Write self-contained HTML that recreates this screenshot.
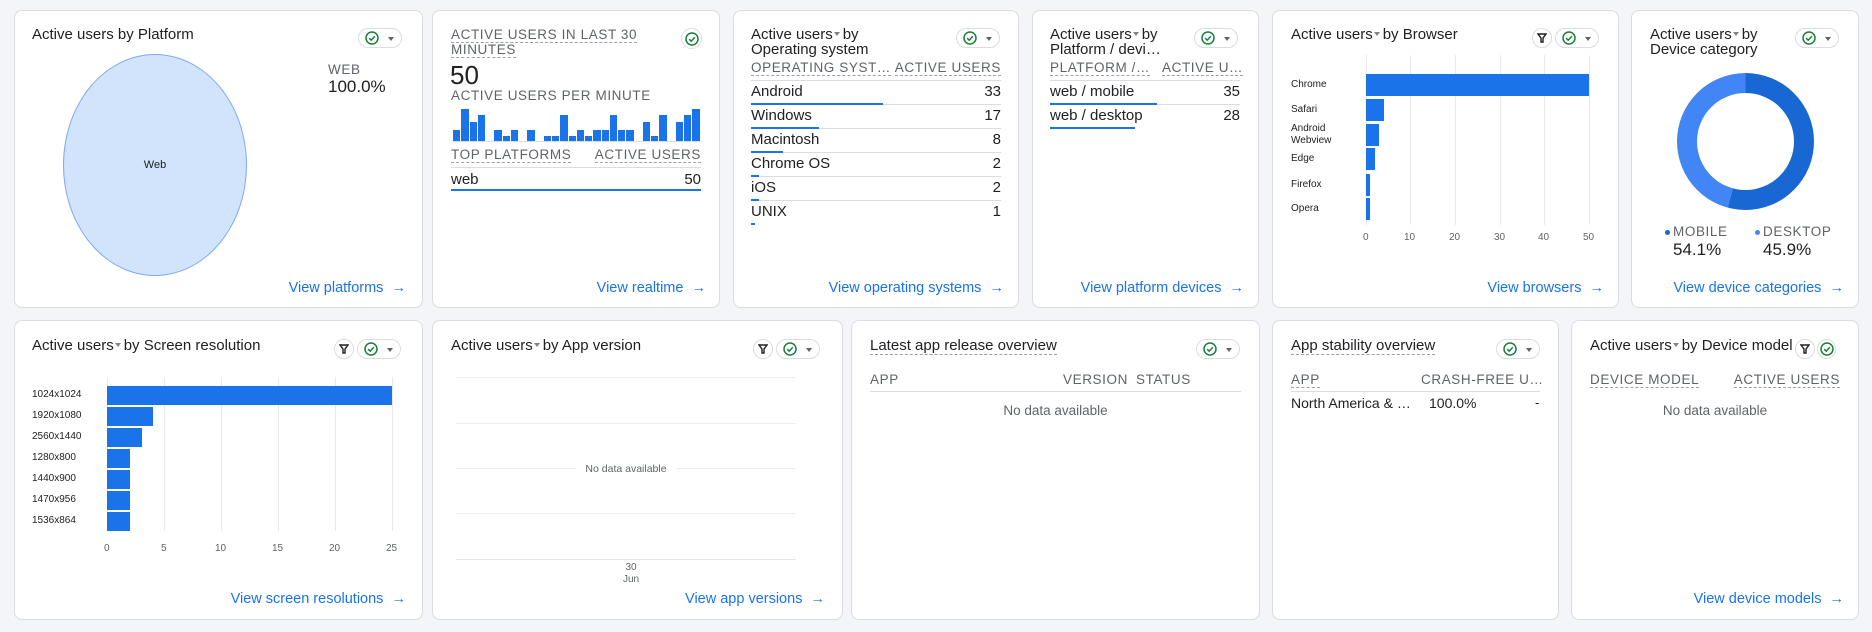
<!DOCTYPE html>
<html><head><meta charset="utf-8"><style>
*{margin:0;padding:0;box-sizing:border-box}
body{width:1872px;height:632px;background:#f3f5f8;font-family:"Liberation Sans",Arial,sans-serif;color:#202124;position:relative;overflow:hidden}
.card{position:absolute;background:#fff;border:1px solid #dadce0;border-radius:8px}
.t{position:absolute;white-space:nowrap;line-height:18px;font-size:15px}
.h{position:absolute;white-space:nowrap;line-height:18px;font-size:13.5px;color:#5f6368;letter-spacing:.6px;text-transform:uppercase}
.r{text-align:right}
.lnk{position:absolute;white-space:nowrap;line-height:18px;font-size:14.5px;color:#1a73e8}
.dot{border-bottom:1px dashed #9aa0a6}
.pill{position:absolute;width:44px;height:20px;border:1px solid #dadce0;border-radius:10px;background:#fff}
.pill .ck{position:absolute;left:6px;top:2px}
.pill .dd{position:absolute;left:29px;top:8px;width:0;height:0;border-left:3px solid transparent;border-right:3px solid transparent;border-top:4px solid #5f6368}
.flt{position:absolute;width:20px;height:20px;border:1px solid #dadce0;border-radius:10px;background:#fff}
.flt svg{position:absolute;left:4px;top:4px}
.tri{display:inline-block;width:0;height:0;border-left:3px solid transparent;border-right:3px solid transparent;border-top:4px solid #80868b;vertical-align:3px;margin:0 3px 0 1px}
.gl{position:absolute;height:1px;background:#dadce0}
.bl{position:absolute;height:2px;background:#1a73e8}
.vg{position:absolute;width:1px;background:#e8eaed}
.bar{position:absolute;background:#1a73e8}
.ax{position:absolute;font-size:10px;color:#5f6368;line-height:12px;white-space:nowrap}
.nd{position:absolute;font-size:13.5px;color:#5f6368;line-height:18px;white-space:nowrap}
</style></head><body>
<svg width="0" height="0" style="position:absolute"><defs>
<symbol id="ck" viewBox="0 0 14 14"><circle cx="7" cy="7" r="6" fill="none" stroke="#188038" stroke-width="1.5"/><path d="M4.2 7.2l2 2 3.6-4" fill="none" stroke="#188038" stroke-width="1.5"/></symbol>
<symbol id="fl" viewBox="0 0 10 10"><path d="M1 1h8L6 5v4H4V5z" fill="none" stroke="#202124" stroke-width="1.4"/></symbol>
</defs></svg>

<!-- Row 1 cards -->
<div class="card" style="left:14px;top:10px;width:409px;height:298px"></div>
<div class="card" style="left:432px;top:10px;width:288px;height:298px"></div>
<div class="card" style="left:733px;top:10px;width:286px;height:298px"></div>
<div class="card" style="left:1032px;top:10px;width:227px;height:298px"></div>
<div class="card" style="left:1272px;top:10px;width:347px;height:298px"></div>
<div class="card" style="left:1631px;top:10px;width:228px;height:298px"></div>
<!-- Row 2 cards -->
<div class="card" style="left:14px;top:320px;width:409px;height:300px"></div>
<div class="card" style="left:432px;top:320px;width:411px;height:300px"></div>
<div class="card" style="left:851px;top:320px;width:409px;height:300px"></div>
<div class="card" style="left:1272px;top:320px;width:287px;height:300px"></div>
<div class="card" style="left:1571px;top:320px;width:288px;height:300px"></div>

<!-- Card 1 -->
<div class="t" style="left:32px;top:26px">Active users by Platform</div>
<div class="pill" style="left:358px;top:28px"><svg class="ck" width="14" height="14"><use href="#ck"/></svg><i class="dd"></i></div>
<div style="position:absolute;left:63px;top:54px;width:184px;height:222px;border-radius:50%;background:#d2e3fc;border:1px solid #7baaf7"></div>
<div class="t" style="left:63px;top:156px;width:184px;text-align:center;font-size:11px">Web</div>
<div class="h" style="left:328px;top:61px">WEB</div>
<div class="t" style="left:328px;top:78px;font-size:17px">100.0%</div>
<div class="lnk" style="right:1466px;top:279px">View platforms&nbsp; →</div>

<!-- Card 2 -->
<div class="h" style="left:451px;top:26px"><span class="dot">ACTIVE USERS IN LAST 30</span></div>
<div class="h" style="left:451px;top:41px"><span class="dot">MINUTES</span></div>
<div style="position:absolute;left:681px;top:28px;width:21px;height:21px;border:1px solid #dadce0;border-radius:50%"><svg style="position:absolute;left:3px;top:3px" width="14" height="14"><use href="#ck"/></svg></div>
<div class="t" style="left:450px;top:61px;font-size:26px;line-height:28px">50</div>
<div class="h" style="left:451px;top:87px">ACTIVE USERS PER MINUTE</div>
<div id="bars" style="position:absolute;left:453px;top:110px;width:248px;height:32px;border-bottom:1px solid #dadce0"></div>
<div class="h" style="left:451px;top:146px"><span class="dot">TOP PLATFORMS</span></div>
<div class="h r" style="right:1171px;top:146px"><span class="dot">ACTIVE USERS</span></div>
<div class="gl" style="left:451px;top:167px;width:250px"></div>
<div class="t" style="left:451px;top:171px">web</div>
<div class="t r" style="right:1171px;top:171px">50</div>
<div class="bl" style="left:451px;top:189px;width:250px"></div>
<div class="lnk" style="right:1166px;top:279px">View realtime&nbsp; →</div>

<!-- Card 3 -->
<div class="t" style="left:751px;top:26px">Active users<i class="tri"></i>by</div>
<div class="t" style="left:751px;top:41px">Operating system</div>
<div class="pill" style="left:956px;top:28px"><svg class="ck" width="14" height="14"><use href="#ck"/></svg><i class="dd"></i></div>
<div class="h" style="left:751px;top:59px"><span class="dot">OPERATING SYST…</span></div>
<div class="h r" style="right:871px;top:59px"><span class="dot">ACTIVE USERS</span></div>
<div class="gl" style="left:751px;top:80px;width:250px"></div>
<div class="t" style="left:751px;top:83px">Android</div><div class="t r" style="right:871px;top:83px">33</div>
<div class="gl" style="left:751px;top:104px;width:250px"></div><div class="bl" style="left:751px;top:103px;width:132px"></div>
<div class="t" style="left:751px;top:107px">Windows</div><div class="t r" style="right:871px;top:107px">17</div>
<div class="gl" style="left:751px;top:128px;width:250px"></div><div class="bl" style="left:751px;top:127px;width:68px"></div>
<div class="t" style="left:751px;top:131px">Macintosh</div><div class="t r" style="right:871px;top:131px">8</div>
<div class="gl" style="left:751px;top:152px;width:250px"></div><div class="bl" style="left:751px;top:151px;width:32px"></div>
<div class="t" style="left:751px;top:155px">Chrome OS</div><div class="t r" style="right:871px;top:155px">2</div>
<div class="gl" style="left:751px;top:176px;width:250px"></div><div class="bl" style="left:751px;top:175px;width:8px"></div>
<div class="t" style="left:751px;top:179px">iOS</div><div class="t r" style="right:871px;top:179px">2</div>
<div class="gl" style="left:751px;top:200px;width:250px"></div><div class="bl" style="left:751px;top:199px;width:8px"></div>
<div class="t" style="left:751px;top:203px">UNIX</div><div class="t r" style="right:871px;top:203px">1</div>
<div class="bl" style="left:751px;top:223px;width:4px"></div>
<div class="lnk" style="right:868px;top:279px">View operating systems&nbsp; →</div>

<!-- Card 4 -->
<div class="t" style="left:1050px;top:26px">Active users<i class="tri"></i>by</div>
<div class="t" style="left:1050px;top:41px">Platform / devi…</div>
<div class="pill" style="left:1194px;top:28px"><svg class="ck" width="14" height="14"><use href="#ck"/></svg><i class="dd"></i></div>
<div class="h" style="left:1050px;top:59px"><span class="dot">PLATFORM /…</span></div>
<div class="h" style="left:1162px;top:59px"><span class="dot">ACTIVE U…</span></div>
<div class="gl" style="left:1050px;top:80px;width:190px"></div>
<div class="t" style="left:1050px;top:83px">web / mobile</div><div class="t r" style="right:632px;top:83px">35</div>
<div class="gl" style="left:1050px;top:104px;width:190px"></div><div class="bl" style="left:1050px;top:103px;width:107px"></div>
<div class="t" style="left:1050px;top:107px">web / desktop</div><div class="t r" style="right:632px;top:107px">28</div>
<div class="bl" style="left:1050px;top:127px;width:85px"></div>
<div class="lnk" style="right:628px;top:279px">View platform devices&nbsp; →</div>

<!-- Card 5 Browser -->
<div class="t" style="left:1291px;top:26px">Active users<i class="tri"></i>by Browser</div>
<div class="flt" style="left:1532px;top:28px"><svg width="10" height="10"><use href="#fl"/></svg></div>
<div class="pill" style="left:1555px;top:28px"><svg class="ck" width="14" height="14"><use href="#ck"/></svg><i class="dd"></i></div>
<div class="vg" style="left:1366px;top:55px;height:170px"></div>
<div class="vg" style="left:1410px;top:55px;height:170px"></div>
<div class="vg" style="left:1455px;top:55px;height:170px"></div>
<div class="vg" style="left:1500px;top:55px;height:170px"></div>
<div class="vg" style="left:1544px;top:55px;height:170px"></div>
<div class="vg" style="left:1589px;top:55px;height:170px"></div>
<div class="bar" style="left:1366px;top:74px;width:223px;height:22px"></div>
<div class="bar" style="left:1366px;top:99px;width:18px;height:22px"></div>
<div class="bar" style="left:1366px;top:124px;width:13px;height:22px"></div>
<div class="bar" style="left:1366px;top:148px;width:9px;height:22px"></div>
<div class="bar" style="left:1366px;top:174px;width:4px;height:22px"></div>
<div class="bar" style="left:1366px;top:198px;width:4px;height:22px"></div>
<div class="ax" style="left:1291px;top:79px;color:#202124">Chrome</div>
<div class="ax" style="left:1291px;top:104px;color:#202124">Safari</div>
<div class="ax" style="left:1291px;top:123px;color:#202124">Android<br>Webview</div>
<div class="ax" style="left:1291px;top:153px;color:#202124">Edge</div>
<div class="ax" style="left:1291px;top:179px;color:#202124">Firefox</div>
<div class="ax" style="left:1291px;top:203px;color:#202124">Opera</div>
<div class="ax" style="left:1363px;top:232px">0</div>
<div class="ax" style="left:1404px;top:232px">10</div>
<div class="ax" style="left:1449px;top:232px">20</div>
<div class="ax" style="left:1494px;top:232px">30</div>
<div class="ax" style="left:1538px;top:232px">40</div>
<div class="ax" style="left:1583px;top:232px">50</div>
<div class="lnk" style="right:268px;top:279px">View browsers&nbsp; →</div>

<!-- Card 6 Device category -->
<div class="t" style="left:1650px;top:26px">Active users<i class="tri"></i>by</div>
<div class="t" style="left:1650px;top:41px">Device category</div>
<div class="pill" style="left:1795px;top:28px"><svg class="ck" width="14" height="14"><use href="#ck"/></svg><i class="dd"></i></div>
<div style="position:absolute;left:1677px;top:73px;width:137px;height:137px;border-radius:50%;background:conic-gradient(#1967d2 0 194.8deg,#4285f4 194.8deg 360deg)"></div>
<div style="position:absolute;left:1697px;top:93px;width:97px;height:97px;border-radius:50%;background:#fff"></div>
<div style="position:absolute;left:1665px;top:230px;width:5px;height:5px;border-radius:50%;background:#1967d2"></div>
<div class="h" style="left:1673px;top:223px">MOBILE</div>
<div class="t" style="left:1673px;top:241px;font-size:17px">54.1%</div>
<div style="position:absolute;left:1755px;top:230px;width:5px;height:5px;border-radius:50%;background:#4285f4"></div>
<div class="h" style="left:1763px;top:223px">DESKTOP</div>
<div class="t" style="left:1763px;top:241px;font-size:17px">45.9%</div>
<div class="lnk" style="right:28px;top:279px">View device categories&nbsp; →</div>

<!-- Row 2 Card A -->
<div class="t" style="left:32px;top:337px">Active users<i class="tri"></i>by Screen resolution</div>
<div class="flt" style="left:334px;top:339px"><svg width="10" height="10"><use href="#fl"/></svg></div>
<div class="pill" style="left:357px;top:339px"><svg class="ck" width="14" height="14"><use href="#ck"/></svg><i class="dd"></i></div>
<div class="vg" style="left:107px;top:377px;height:154px"></div>
<div class="vg" style="left:164px;top:377px;height:154px"></div>
<div class="vg" style="left:221px;top:377px;height:154px"></div>
<div class="vg" style="left:278px;top:377px;height:154px"></div>
<div class="vg" style="left:335px;top:377px;height:154px"></div>
<div class="vg" style="left:392px;top:377px;height:154px"></div>
<div class="bar" style="left:107px;top:386px;width:285px;height:19px"></div>
<div class="bar" style="left:107px;top:407px;width:46px;height:19px"></div>
<div class="bar" style="left:107px;top:428px;width:35px;height:19px"></div>
<div class="bar" style="left:107px;top:449px;width:23px;height:19px"></div>
<div class="bar" style="left:107px;top:470px;width:23px;height:19px"></div>
<div class="bar" style="left:107px;top:491px;width:23px;height:19px"></div>
<div class="bar" style="left:107px;top:512px;width:23px;height:19px"></div>
<div class="ax" style="left:32px;top:389px;color:#202124">1024x1024</div>
<div class="ax" style="left:32px;top:410px;color:#202124">1920x1080</div>
<div class="ax" style="left:32px;top:431px;color:#202124">2560x1440</div>
<div class="ax" style="left:32px;top:452px;color:#202124">1280x800</div>
<div class="ax" style="left:32px;top:473px;color:#202124">1440x900</div>
<div class="ax" style="left:32px;top:494px;color:#202124">1470x956</div>
<div class="ax" style="left:32px;top:515px;color:#202124">1536x864</div>
<div class="ax" style="left:104px;top:543px">0</div>
<div class="ax" style="left:161px;top:543px">5</div>
<div class="ax" style="left:215px;top:543px">10</div>
<div class="ax" style="left:272px;top:543px">15</div>
<div class="ax" style="left:329px;top:543px">20</div>
<div class="ax" style="left:386px;top:543px">25</div>
<div class="lnk" style="right:1466px;top:590px">View screen resolutions&nbsp; →</div>

<!-- Card B -->
<div class="t" style="left:451px;top:337px">Active users<i class="tri"></i>by App version</div>
<div class="flt" style="left:753px;top:339px"><svg width="10" height="10"><use href="#fl"/></svg></div>
<div class="pill" style="left:776px;top:339px"><svg class="ck" width="14" height="14"><use href="#ck"/></svg><i class="dd"></i></div>
<div class="gl" style="left:456px;top:377px;width:340px;background:#eceef0"></div>
<div class="gl" style="left:456px;top:423px;width:340px;background:#eceef0"></div>
<div class="gl" style="left:456px;top:468px;width:340px;background:#eceef0"></div>
<div class="gl" style="left:456px;top:513px;width:340px;background:#eceef0"></div>
<div class="gl" style="left:456px;top:559px;width:340px;background:#e3e5e8"></div>
<div style="position:absolute;left:576px;top:461px;width:100px;height:16px;background:#fff"></div>
<div class="ax" style="left:576px;top:463px;width:100px;text-align:center;font-size:10.5px">No data available</div>
<div class="ax" style="left:621px;top:562px;width:20px;text-align:center">30<br>Jun</div>
<div class="lnk" style="right:1047px;top:590px">View app versions&nbsp; →</div>

<!-- Card C -->
<div class="t" style="left:870px;top:337px"><span class="dot">Latest app release overview</span></div>
<div class="pill" style="left:1196px;top:339px"><svg class="ck" width="14" height="14"><use href="#ck"/></svg><i class="dd"></i></div>
<div class="h" style="left:870px;top:371px">APP</div>
<div class="h" style="left:1063px;top:371px">VERSION</div>
<div class="h" style="left:1136px;top:371px">STATUS</div>
<div class="gl" style="left:870px;top:391px;width:371px"></div>
<div class="nd" style="left:870px;top:402px;width:371px;text-align:center">No data available</div>

<!-- Card D -->
<div class="t" style="left:1291px;top:337px"><span class="dot">App stability overview</span></div>
<div class="pill" style="left:1496px;top:339px"><svg class="ck" width="14" height="14"><use href="#ck"/></svg><i class="dd"></i></div>
<div class="h" style="left:1291px;top:371px"><span class="dot">APP</span></div>
<div class="h" style="left:1421px;top:371px">CRASH-FREE U…</div>
<div class="gl" style="left:1291px;top:391px;width:249px"></div>
<div class="t" style="left:1291px;top:394px;font-size:14px">North America &amp; …</div>
<div class="t" style="left:1429px;top:394px;font-size:14px">100.0%</div>
<div class="t" style="left:1535px;top:394px;font-size:13px">-</div>

<!-- Card E -->
<div class="t" style="left:1590px;top:337px">Active users<i class="tri"></i>by Device model</div>
<div class="flt" style="left:1795px;top:339px"><svg width="10" height="10"><use href="#fl"/></svg></div>
<div class="flt" style="left:1817px;top:339px;width:19px"><svg style="position:absolute;left:2px;top:2px" width="14" height="14"><use href="#ck"/></svg></div>
<div class="h" style="left:1590px;top:371px"><span class="dot">DEVICE MODEL</span></div>
<div class="h r" style="right:32px;top:371px"><span class="dot">ACTIVE USERS</span></div>
<div class="nd" style="left:1590px;top:402px;width:250px;text-align:center">No data available</div>
<div class="lnk" style="right:28px;top:590px">View device models&nbsp; →</div>

<script>
var h=[.35,1,.58,.8,0,.35,.17,.35,0,.35,0,.17,.17,.8,.17,.35,.17,.35,.35,.8,.35,.35,0,.58,.17,.8,0,.58,.8,1];
var b=document.getElementById('bars'),s='';
for(var i=0;i<30;i++){if(h[i])s+='<div style="position:absolute;left:'+(i*8.25)+'px;bottom:0;width:7.3px;height:'+(h[i]*32)+'px;background:#1a73e8"></div>';}
b.innerHTML=s;
</script>
</body></html>
